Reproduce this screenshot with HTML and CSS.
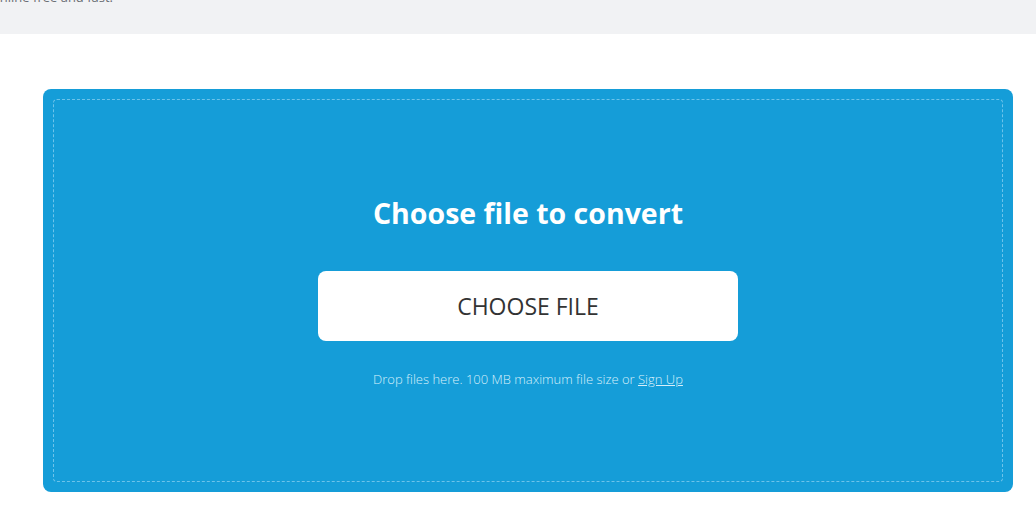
FILE: index.html
```html
<!DOCTYPE html>
<html>
<head>
<meta charset="utf-8">
<link rel="stylesheet" href="styles.css">
</head>
<body>
<header class="topband">
  <p class="tagline">online free and fast.</p>
</header>
<main class="page">
  <section class="dropzone">
    <div class="dropzone-inner">
      <h1 class="dz-title">Choose file to convert</h1>
      <button class="choose-btn" type="button">CHOOSE FILE</button>
      <p class="dz-note">Drop files here. 100 MB maximum file size or <a href="#" class="signup">Sign Up</a></p>
    </div>
  </section>
</main>
</body>
</html>
```

FILE: styles.css
```css
* { box-sizing: border-box; }
html, body { margin: 0; padding: 0; background: #ffffff; }
body { font-family: "Open Sans", "Noto Sans", sans-serif; overflow: hidden; }

.topband {
  height: 34px;
  background: #f1f2f4;
  overflow: hidden;
}
.tagline {
  margin: -12px 0 0 -8px;
  font-size: 13px;
  line-height: 18px;
  color: #6b6f74;
}

.page {
  padding: 55px 23px 0 43px;
}

.dropzone {
  background: #159dd8;
  border-radius: 8px;
  padding: 10px;
  height: 403px;
}
.dropzone-inner {
  height: 100%;
  border: 1px dashed #6cc3ea;
  border-radius: 4px;
  display: flex;
  flex-direction: column;
  align-items: center;
  padding-top: 93px;
}

.dz-title {
  margin: 0;
  color: #ffffff;
  font-weight: 700;
  font-size: 28.5px;
  line-height: 40px;
}

.choose-btn {
  margin-top: 38px;
  width: 420px;
  height: 70px;
  border: 0;
  border-radius: 8px;
  background: #ffffff;
  color: #333333;
  font-family: "Open Sans", "Noto Sans", sans-serif;
  font-size: 23px;
  font-weight: 400;
}

.dz-note {
  margin: 29px 0 0;
  color: #d6effa;
  font-size: 13px;
  line-height: 18px;
  font-weight: 300;
}
.signup { color: #d6effa; text-decoration: underline; }
```
